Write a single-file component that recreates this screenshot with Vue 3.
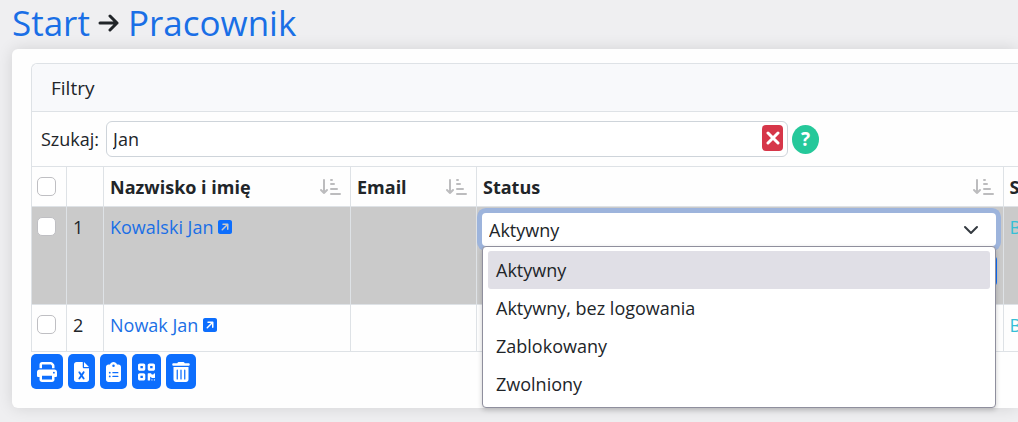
<template>
  <div class="page">
    <h1 class="breadcrumb">
      <a href="#">Start</a>
      <svg class="crumb-arrow" viewBox="0 0 22 18" aria-hidden="true">
        <path d="M2 9h17M12 2l7 7-7 7" />
      </svg>
      <a href="#">Pracownik</a>
    </h1>

    <main class="card">
      <section class="filters">
        <h2 class="filters-title">Filtry</h2>
        <div class="filters-row">
          <label for="search">Szukaj:</label>
          <div class="search-box">
            <input id="search" v-model="search" type="text" />
            <button class="clear-btn" type="button" aria-label="Wyczyść" @click="search = ''">
              <svg viewBox="0 0 14 14"><path d="M2 2l10 10M12 2L2 12" /></svg>
            </button>
          </div>
          <button class="help-btn" type="button">?</button>
        </div>
      </section>

      <table class="grid">
        <colgroup>
          <col class="col-check" />
          <col class="col-no" />
          <col class="col-name" />
          <col class="col-email" />
          <col />
          <col class="col-last" />
        </colgroup>
        <thead>
          <tr>
            <th><input type="checkbox" aria-label="Zaznacz wszystkie" /></th>
            <th></th>
            <th v-for="column in columns" :key="column">
              <div class="head-cell">
                <span>{{ column }}</span>
                <svg class="sort-icon" viewBox="0 0 22 18" aria-hidden="true">
                  <path d="M5 2v13M2 12l3 3 3-3" />
                  <path d="M12 2h1M12 6h3M12 11h6M12 16h9" />
                </svg>
              </div>
            </th>
            <th>S</th>
          </tr>
        </thead>
        <tbody>
          <tr v-for="row in rows" :key="row.id" :class="{ editing: row.editing }">
            <td><input type="checkbox" :aria-label="row.name" /></td>
            <td>{{ row.id }}</td>
            <td>
              <a class="name-link" href="#">
                {{ row.name }}
                <svg viewBox="0 32 448 448" aria-hidden="true"><path :d="linkIcon" /></svg>
              </a>
            </td>
            <td></td>
            <td class="status-cell">
              <div v-if="row.editing" class="editor">
                <div class="select-wrap">
                  <select v-model="status" aria-label="Status">
                    <option v-for="option in options" :key="option">{{ option }}</option>
                  </select>
                  <svg class="chevron" viewBox="0 0 16 16" aria-hidden="true">
                    <path d="M2 5l6 6 6-6" />
                  </svg>
                  <ul class="menu">
                    <li
                      v-for="option in options"
                      :key="option"
                      :class="{ active: option === status }"
                      @click="status = option"
                    >
                      {{ option }}
                    </li>
                  </ul>
                </div>
                <button class="save-btn" type="button" aria-label="Zapisz"></button>
              </div>
            </td>
            <td><a class="cyan-link" href="#">B</a></td>
          </tr>
        </tbody>
      </table>

      <div class="toolbar">
        <button v-for="tool in tools" :key="tool.name" type="button" :class="tool.name" :aria-label="tool.label">
          <svg :viewBox="tool.box"><path :d="tool.path" /></svg>
        </button>
      </div>
    </main>
  </div>
</template>

<script setup>
import { ref } from 'vue'

const search = ref('Jan')
const status = ref('Aktywny')

const columns = ['Nazwisko i imię', 'Email', 'Status']
const options = ['Aktywny', 'Aktywny, bez logowania', 'Zablokowany', 'Zwolniony']
const rows = [
  { id: 1, name: 'Kowalski Jan', editing: true },
  { id: 2, name: 'Nowak Jan', editing: false }
]

const linkIcon =
  'M384 32c35.3 0 64 28.7 64 64V416c0 35.3-28.7 64-64 64H64c-35.3 0-64-28.7-64-64V96C0 60.7 28.7 32 64 32H384zM160 144c-13.3 0-24 10.7-24 24s10.7 24 24 24h94.1L119 327c-9.4 9.4-9.4 24.6 0 33.9s24.6 9.4 33.9 0l135-135V328c0 13.3 10.7 24 24 24s24-10.7 24-24V168c0-13.3-10.7-24-24-24H160z'

const tools = [
  {
    name: 'print',
    label: 'Drukuj',
    box: '0 0 512 512',
    path: 'M128 0C92.7 0 64 28.7 64 64v96h64V64H354.7L384 93.3V160h64V93.3c0-17-6.7-33.3-18.7-45.3L400 18.7C388 6.7 371.7 0 354.7 0H128zM384 352v96H128V352H384zm64 32h32c17.7 0 32-14.3 32-32V256c0-35.3-28.7-64-64-64H64c-35.3 0-64 28.7-64 64v96c0 17.7 14.3 32 32 32H64v64c0 35.3 28.7 64 64 64H384c35.3 0 64-28.7 64-64V384zM432 248a24 24 0 1 1 0 48 24 24 0 1 1 0-48z'
  },
  {
    name: 'excel',
    label: 'Eksport do Excela',
    box: '0 0 384 512',
    path: 'M64 0C28.7 0 0 28.7 0 64V448c0 35.3 28.7 64 64 64H320c35.3 0 64-28.7 64-64V160H256c-17.7 0-32-14.3-32-32V0H64zM256 0V128H384L256 0zM155.7 250.2L192 302.1l36.3-51.9c7.6-10.9 22.6-13.5 33.4-5.9s13.5 22.6 5.9 33.4L221.3 344l46.4 66.2c7.6 10.9 5 25.8-5.9 33.4s-25.8 5-33.4-5.9L192 385.8l-36.3 51.9c-7.6 10.9-22.6 13.5-33.4 5.9s-13.5-22.6-5.9-33.4L162.7 344l-46.4-66.2c-7.6-10.9-5-25.8 5.9-33.4s25.8-5 33.4 5.9z'
  },
  {
    name: 'list',
    label: 'Kopiuj do schowka',
    box: '0 0 384 512',
    path: 'M192 0c-41.8 0-77.4 26.7-90.5 64H64C28.7 64 0 92.7 0 128V448c0 35.3 28.7 64 64 64H320c35.3 0 64-28.7 64-64V128c0-35.3-28.7-64-64-64H282.5C269.4 26.7 233.8 0 192 0zm0 64a32 32 0 1 1 0 64 32 32 0 1 1 0-64zM72 272a24 24 0 1 1 48 0 24 24 0 1 1 -48 0zm104-16H304c8.8 0 16 7.2 16 16s-7.2 16-16 16H176c-8.8 0-16-7.2-16-16s7.2-16 16-16zM72 368a24 24 0 1 1 48 0 24 24 0 1 1 -48 0zm88 0c0-8.8 7.2-16 16-16H304c8.8 0 16 7.2 16 16s-7.2 16-16 16H176c-8.8 0-16-7.2-16-16z'
  },
  {
    name: 'qr',
    label: 'Kody QR',
    box: '0 0 448 512',
    path: 'M0 80C0 53.5 21.5 32 48 32h96c26.5 0 48 21.5 48 48v96c0 26.5-21.5 48-48 48H48c-26.5 0-48-21.5-48-48V80zM64 96v64h64V96H64zM0 336c0-26.5 21.5-48 48-48h96c26.5 0 48 21.5 48 48v96c0 26.5-21.5 48-48 48H48c-26.5 0-48-21.5-48-48V336zm64 16v64h64V352H64zM304 32h96c26.5 0 48 21.5 48 48v96c0 26.5-21.5 48-48 48H304c-26.5 0-48-21.5-48-48V80c0-26.5 21.5-48 48-48zm80 64H320v64h64V96zM256 304c0-8.8 7.2-16 16-16h64c8.8 0 16 7.2 16 16s7.2 16 16 16h32c8.8 0 16-7.2 16-16s7.2-16 16-16s16 7.2 16 16v96c0 8.8-7.2 16-16 16H368c-8.8 0-16-7.2-16-16s-7.2-16-16-16s-16 7.2-16 16v64c0 8.8-7.2 16-16 16H272c-8.8 0-16-7.2-16-16V304zM368 480a16 16 0 1 1 0-32 16 16 0 1 1 0 32zm64 0a16 16 0 1 1 0-32 16 16 0 1 1 0 32z'
  },
  {
    name: 'trash',
    label: 'Usuń',
    box: '0 0 448 512',
    path: 'M135.2 17.7L128 32H32C14.3 32 0 46.3 0 64S14.3 96 32 96H416c17.7 0 32-14.3 32-32s-14.3-32-32-32H320l-7.2-14.3C307.4 6.8 296.3 0 284.2 0H163.8c-12.1 0-23.2 6.8-28.6 17.7zM416 128H32V448c0 35.3 28.7 64 64 64H352c35.3 0 64-28.7 64-64V128zM144 208V432c0 8.8-7.2 16-16 16s-16-7.2-16-16V208c0-8.8 7.2-16 16-16s16 7.2 16 16zm96 0V432c0 8.8-7.2 16-16 16s-16-7.2-16-16V208c0-8.8 7.2-16 16-16s16 7.2 16 16zm96 0V432c0 8.8-7.2 16-16 16s-16-7.2-16-16V208c0-8.8 7.2-16 16-16s16 7.2 16 16z'
  }
]
</script>

<style>
body {
  background: #efeff1;
}
</style>

<style scoped>
* {
  box-sizing: border-box;
}

.page {
  overflow: hidden;
  padding: 0 0 14px 12px;
  font-family: 'Open Sans', 'Noto Sans', sans-serif;
  font-size: 18px;
  line-height: 26px;
  color: #212529;
}

a {
  color: #1a6fe6;
  text-decoration: none;
}

button,
input,
select {
  font: inherit;
  color: inherit;
}

/* Breadcrumb */
.breadcrumb {
  display: flex;
  align-items: center;
  gap: 8px;
  margin: 0;
  padding-bottom: 3px;
  font-size: 35px;
  font-weight: 400;
  line-height: 46px;
}

.crumb-arrow {
  width: 22px;
  height: 18px;
  fill: none;
  stroke: #212529;
  stroke-width: 3;
  stroke-linecap: round;
  stroke-linejoin: round;
}

.card {
  padding: 14px 0 19px 19px;
  background: #fefefe;
  border-radius: 6px 0 0 6px;
  box-shadow: 0 0 16px rgba(0, 0, 0, 0.12);
}

/* Filters */
.filters {
  border: 1px solid #dee2e6;
  border-width: 1px 0 0 1px;
  border-radius: 6px 0 0 0;
}

.filters-title {
  margin: 0;
  padding: 11px 19px 10px;
  font-size: 19px;
  font-weight: 400;
  background: #f8f9fb;
  border-bottom: 1px solid #dee2e6;
  border-radius: 6px 0 0 0;
}

.filters-row {
  display: flex;
  align-items: center;
  padding: 9px;
}

.search-box {
  position: relative;
  flex: 1;
  max-width: 682px;
  margin: 0 4px 0 7px;
}

.search-box input {
  display: block;
  width: 100%;
  height: 36px;
  padding: 0 40px 0 6px;
  background: #fff;
  border: 1px solid #ced4da;
  border-radius: 6px;
}

.clear-btn {
  position: absolute;
  top: 4px;
  right: 5px;
  display: flex;
  align-items: center;
  justify-content: center;
  width: 21px;
  height: 26px;
  padding: 0;
  background: #d63649;
  border: 0;
  border-radius: 4px;
}

.clear-btn svg {
  width: 14px;
  height: 14px;
  fill: none;
  stroke: #fff;
  stroke-width: 3;
  stroke-linecap: round;
}

.help-btn {
  width: 27px;
  height: 29px;
  padding: 0;
  font-size: 19px;
  font-weight: 700;
  color: #fff;
  background: #25c89a;
  border: 0;
  border-radius: 50%;
}

/* Grid */
.grid {
  width: 100%;
  table-layout: fixed;
  border-collapse: collapse;
}

.col-check {
  width: 35px;
}

.col-no {
  width: 37px;
}

.col-name {
  width: 247px;
}

.col-email {
  width: 126px;
}

.col-last {
  width: 15px;
}

th,
td {
  padding: 7px 6px;
  text-align: left;
  vertical-align: top;
  white-space: nowrap;
  border: 1px solid #dee2e6;
  border-right: 0;
}

th:first-child,
td:first-child {
  padding-left: 5px;
}

th {
  padding-bottom: 6px;
  font-weight: 700;
}

.status-cell {
  padding: 6px 7px 6px 5px;
}

tbody tr {
  height: 47px;
}

tr.editing {
  height: 98px;
  background: #cacaca;
}

.head-cell {
  display: flex;
  align-items: center;
  justify-content: space-between;
  padding-right: 3px;
}

.sort-icon {
  width: 22px;
  height: 18px;
  fill: none;
  stroke: #bcbcbe;
  stroke-width: 2;
  stroke-linecap: round;
  stroke-linejoin: round;
}

input[type='checkbox'] {
  display: block;
  width: 19px;
  height: 19px;
  margin: 3px 0 0;
  appearance: none;
  background: #fff;
  border: 1px solid #bfbfc3;
  border-radius: 5px;
}

.name-link {
  display: flex;
  align-items: center;
  gap: 5px;
}

.name-link svg {
  width: 14px;
  height: 14px;
  fill: #0d6efd;
}

.cyan-link {
  color: #35bfd6;
}

/* Status editor */
.editor {
  display: flex;
  flex-direction: column;
  align-items: flex-end;
  gap: 9px;
}

.select-wrap {
  position: relative;
  width: 100%;
}

.select-wrap select {
  display: block;
  width: 100%;
  height: 33px;
  padding: 0 40px 0 7px;
  appearance: none;
  background: #fff;
  border: 0;
  border-radius: 4px;
  box-shadow: 0 0 0 5px #9db4dc;
}

.chevron {
  position: absolute;
  top: 9px;
  right: 17px;
  width: 16px;
  height: 16px;
  fill: none;
  stroke: #343a40;
  stroke-width: 2;
  stroke-linecap: round;
  stroke-linejoin: round;
}

.menu {
  position: absolute;
  z-index: 5;
  top: 100%;
  left: 0;
  right: 0;
  margin: 0;
  padding: 4px 5px;
  list-style: none;
  background: #fff;
  border: 1px solid #8f8f9d;
  border-radius: 4px;
  box-shadow: 0 2px 5px rgba(0, 0, 0, 0.2);
}

.menu li {
  padding: 6px 8px;
  border-radius: 3px;
}

.menu li.active {
  background: #e0dfe6;
}

.save-btn {
  width: 40px;
  height: 32px;
  margin-right: -1px;
  padding: 0;
  background: #0d6efd;
  border: 0;
  border-radius: 5px;
}

/* Toolbar */
.toolbar {
  display: flex;
  gap: 5px;
  padding-top: 2px;
}

.toolbar button {
  display: flex;
  align-items: center;
  justify-content: center;
  height: 35px;
  padding: 0 6px;
  background: #0d6efd;
  border: 0;
  border-radius: 5px;
}

.toolbar svg {
  width: 15px;
  height: 20px;
  fill: #fff;
}

.toolbar .print svg {
  width: 20px;
}

.toolbar .qr svg {
  width: 17px;
}

.toolbar .trash svg {
  width: 18px;
}
</style>
